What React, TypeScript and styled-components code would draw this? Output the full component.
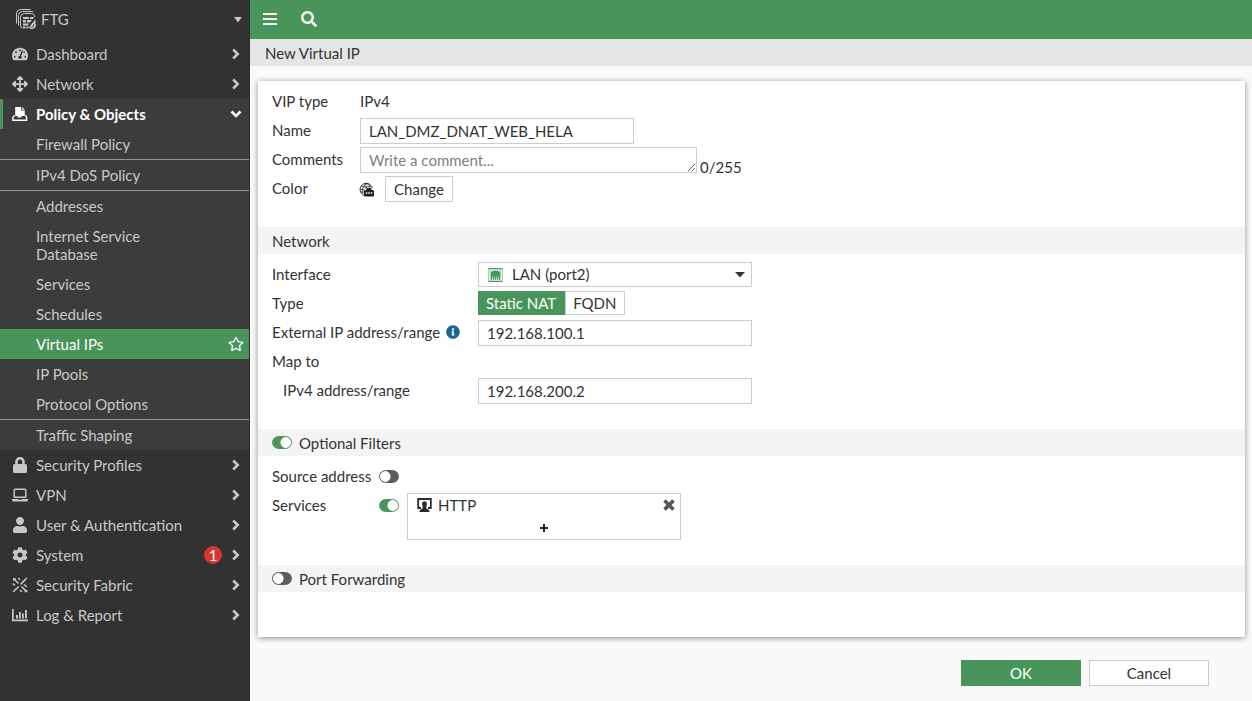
import React, { useState } from 'react';
import styled, { createGlobalStyle, css } from 'styled-components';
import { FaArrowsAlt, FaCog, FaInfoCircle, FaLock, FaRegStar, FaSearch, FaTachometerAlt, FaUser } from 'react-icons/fa';

const green = '#48945a';
const border = '#cccccc';

const GlobalStyle = createGlobalStyle`
  * { box-sizing: border-box; }
  body {
    margin: 0;
    background: #fafafa;
    color: #333333;
    font: 15px/18px Lato, "Liberation Sans", sans-serif;
  }
  input, select, textarea, button { font: inherit; color: inherit; margin: 0; }
`;

const Page = styled.div`
  display: flex;
  min-height: 100vh;
`;

const Sidebar = styled.nav`
  flex: 0 0 250px;
  background: #323232;
  border-right: 1px solid #2b2b2b;
  color: #c8c8c8;
`;

const DeviceButton = styled.button`
  display: flex;
  align-items: center;
  gap: 5px;
  width: 100%;
  height: 39px;
  padding: 0 7px 1px 16px;
  border: 0;
  background: none;
  text-align: left;
`;

const Grow = styled.span`
  flex: 1;
`;

const List = styled.ul`
  margin: 0;
  padding: 0;
  list-style: none;
`;

const Item = styled.li<{ $open?: boolean }>`
  background: ${(p) => (p.$open ? '#3c3c3c' : 'none')};
`;

const NavLink = styled.a<{ $open?: boolean }>`
  display: flex;
  align-items: center;
  gap: 8px;
  height: 30px;
  padding: 0 7px 0 ${(p) => (p.$open ? 9 : 12)}px;
  color: inherit;
  text-decoration: none;
  ${(p) => p.$open && css`
    border-left: 3px solid ${green};
    color: #ffffff;
    font-weight: 700;
  `}
`;

const IconBox = styled.span`
  display: flex;
  flex: 0 0 16px;
  justify-content: center;
`;

const Badge = styled.span`
  width: 18px;
  border-radius: 9px;
  background: #d9362b;
  color: #ffffff;
  text-align: center;
`;

const SubItem = styled.li<{ $divided?: boolean }>`
  border-bottom: ${(p) => (p.$divided ? '1px solid #969696' : '0')};
`;

const SubLink = styled.a<{ $active?: boolean }>`
  display: flex;
  align-items: center;
  justify-content: space-between;
  padding: 6px 5px 6px 36px;
  background: ${(p) => (p.$active ? green : 'none')};
  color: ${(p) => (p.$active ? '#ffffff' : 'inherit')};
  text-decoration: none;
`;

const SubText = styled.span`
  max-width: 150px;
`;

const Main = styled.main`
  flex: 1;
  min-width: 0;
`;

const TopBar = styled.header`
  display: flex;
  align-items: center;
  gap: 24px;
  height: 39px;
  padding: 0 13px 1px;
  background: ${green};
  color: #f4f9f5;
`;

const BareButton = styled.button`
  display: flex;
  align-items: center;
  justify-content: center;
  padding: 0;
  border: 0;
  background: none;
`;

const Title = styled.h1`
  margin: 0;
  padding: 5px 15px 4px;
  background: #e5e5e5;
  font-size: 15px;
  font-weight: 400;
`;

const Card = styled.div`
  margin: 15px 7px 0 8px;
  padding-bottom: 15px;
  background: #ffffff;
  box-shadow: 0 1px 6px rgba(0, 0, 0, 0.45);
`;

const SectionHead = styled.h2`
  display: flex;
  align-items: center;
  gap: 7px;
  margin: 0;
  height: 27px;
  padding: 0 14px;
  background: #f4f4f4;
  font-size: 15px;
  font-weight: 400;
`;

const Rows = styled.div`
  padding: 6px 14px 24px;
`;

const Row = styled.div`
  display: flex;
  min-height: 29px;
`;

const Label = styled.label<{ $width: number; $indent?: boolean }>`
  display: flex;
  align-items: flex-start;
  gap: 6px;
  flex: 0 0 ${(p) => p.$width}px;
  padding: 5px 0 0 ${(p) => (p.$indent ? 11 : 0)}px;
  > svg { margin-top: 2px; }
`;

const Field = styled.div`
  display: flex;
  align-items: flex-start;
  padding: 2px 0 1px;
`;

const PlainValue = styled.span`
  padding-top: 3px;
`;

const TextInput = styled.input`
  width: 274px;
  height: 26px;
  padding: 0 8px;
  border: 1px solid ${border};
  background: #ffffff;
`;

const Comment = styled.textarea`
  display: block;
  width: 337px;
  height: 26px;
  padding: 3px 8px;
  border: 1px solid ${border};
  background: #ffffff;
  resize: both;
  &::placeholder { color: #808080; opacity: 1; }
`;

const Counter = styled.span`
  align-self: flex-end;
  padding-left: 3px;
  line-height: 16px;
  margin-bottom: -2px;
`;

const Button = styled.button<{ $primary?: boolean; $wide?: boolean }>`
  height: 26px;
  min-width: ${(p) => (p.$wide ? '120px' : '68px')};
  padding: 0 8px;
  border: 1px solid ${(p) => (p.$primary ? green : border)};
  background: ${(p) => (p.$primary ? green : '#ffffff')};
  color: ${(p) => (p.$primary ? '#ffffff' : 'inherit')};
`;

const ColorField = styled(Field)`
  gap: 11px;
  align-items: center;
`;

const SelectBox = styled.div`
  display: grid;
  grid-template-columns: 34px 1fr 24px;
  align-items: center;
  width: 274px;
  height: 25px;
  > * { grid-row: 1; pointer-events: none; }
  > svg:first-of-type { grid-column: 1; justify-self: center; z-index: 1; }
  > svg:last-of-type { grid-column: 3; justify-self: center; z-index: 1; }
`;

const Select = styled.select`
  grid-column: 1 / -1;
  height: 25px;
  padding: 0 24px 1px 33px;
  border: 1px solid ${border};
  border-radius: 0;
  background: #ffffff;
  appearance: none;
  pointer-events: auto;
`;

const Segments = styled.div`
  display: flex;
`;

const Segment = styled.label<{ $on: boolean }>`
  position: relative;
  height: 24px;
  padding: 2px 8px 0 7px;
  border: 1px solid ${(p) => (p.$on ? green : border)};
  background: ${(p) => (p.$on ? green : '#ffffff')};
  color: ${(p) => (p.$on ? '#ffffff' : 'inherit')};
`;

const HiddenRadio = styled.input`
  position: absolute;
  inset: 0;
  opacity: 0;
`;

const Toggle = styled.input`
  appearance: none;
  flex: 0 0 20px;
  width: 20px;
  height: 13px;
  border: 1px solid #5c5c5c;
  border-radius: 7px;
  background: radial-gradient(circle at 5px 50%, #ffffff 5px, #5c5c5c 6px);
  &:checked {
    border-color: ${green};
    background: radial-gradient(circle at 13px 50%, #ffffff 5px, ${green} 6px);
  }
`;

const ToggleField = styled(Field)`
  gap: 8px;
  > ${Toggle} { margin-top: 6px; }
`;

const Picker = styled.div`
  width: 274px;
  border: 1px solid ${border};
`;

const Entry = styled.div`
  display: flex;
  align-items: center;
  gap: 6px;
  height: 22px;
  padding: 0 5px 0 9px;
`;

const AddButton = styled(BareButton)`
  width: 100%;
  height: 23px;
`;

const Footer = styled.footer`
  display: flex;
  justify-content: flex-end;
  gap: 8px;
  padding: 23px 43px 15px;
`;

const Chevron = ({ down }: { down?: boolean }) => (
  <svg width="12" height="12" viewBox="0 0 12 12" fill="none" stroke="currentColor" strokeWidth="2.6">
    <path d={down ? 'M1.5 3.5 6 8l4.5-4.5' : 'M3.2 1.5 7.7 6l-4.5 4.5'} />
  </svg>
);

const Caret = ({ width = 10 }: { width?: number }) => (
  <svg width={width} height="5" viewBox="0 0 10 5" preserveAspectRatio="none" fill="currentColor"><path d="M0 0h10L5.6 4.700a.9.9 0 0 1-1.200 0z" /></svg>
);

const DeviceIcon = () => (
  <svg width="20" height="20" viewBox="0 0 20 20" fill="none" stroke="currentColor" strokeWidth="1">
    <path d="M.5 14.500V4.500q0-4 4-4h10M2.500 16.500V6.500q0-4 4-4H17" />
    <path d="M6.500 19Q4.500 18.500 4.500 17V8.500q0-4 4-4h7q3 0 3.500 3.500" />
    <path stroke="none" fill="currentColor" d="M7 8h6v2H7zM14 8h4l-1 2h-3zM7 11h3v2.500H7zM11 11h5l-2 2.500h-3zM7 14.500h5.500v2H7zM7 17.500h2.500v2H7zM10.500 17.500h2v2h-2zM18.700 10c1.300 2 1.300 3.800.4 5.100l1-.5c0 3.400-1.500 5.400-4.200 5.400-2.200 0-3-1.500-2.600-3.100.6.700 1 .7 1.300.6-.4-3.200 3.900-3.900 4.100-7.500z" />
    <path stroke="#323232" d="M15.400 18.500q2.400-.7 2.600-3.200" />
  </svg>
);

const PolicyIcon = () => (
  <svg width="16" height="16" viewBox="0 0 16 16">
    <path fill="currentColor" d="M3.200 1h6v3.500h3.600V10H10l-1 1.500H6L5 10H3.200zM10.200 1l2.600 2.700h-2.600z" />
    <path fill="none" stroke="currentColor" strokeWidth="1.400" d="M2.500 9.300.9 11.500v2.800h13.700v-2.800L13.500 9.300" />
  </svg>
);

const LaptopIcon = () => (
  <svg width="16" height="14" viewBox="0 0 16 14">
    <rect x="2.250" y="1.250" width="11.500" height="8" rx=".6" fill="none" stroke="currentColor" strokeWidth="1.500" />
    <path fill="currentColor" d="M0 11h6l.5.700h3l.5-.7h6v1q0 1.500-1.500 1.500h-13Q0 13.500 0 12z" />
  </svg>
);

const FabricIcon = () => (
  <svg width="16" height="16" viewBox="0 0 16 16" fill="none" stroke="currentColor" strokeWidth="1.500">
    <path d="M2.500 2.500 6.500 6.500M9.500 9.500l4 4M13.500 2.500 8.500 7.500M7 9.500l-4.500 4M6.300 1 8 2.700M10.500 5l4.500-4M.8 6.500 3 8.500M12 7.500l3 2.500M1 15l4-4M8 13l2 2" />
    <path stroke="none" fill="currentColor" d="M1 1h2.500v2.500H1zM12.700 12.700h2.500v2.500h-2.500z" />
  </svg>
);

const ReportIcon = () => (
  <svg width="16" height="13" viewBox="0 0 16 13" fill="currentColor">
    <path d="M0 0h1.700v10.600H16v1.700H0zM4 6h2v3.500H4zM7 3h1.800v6.500H7zM10 4.500h1.800v5H10zM13 1h1.900v8.500H13z" />
  </svg>
);

const MenuIcon = () => (
  <svg width="14" height="12" viewBox="0 0 14 12" fill="currentColor"><path d="M0 0h14v2H0zM0 5h14v2H0zM0 10h14v2H0z" /></svg>
);

const GlobeIcon = () => (
  <svg width="15" height="15" viewBox="0 0 15 15" fill="none" stroke="#2b2b2b">
    <path d="M5 13.300A6.200 6.200 0 1 1 13.300 6" />
    <path strokeWidth=".8" d="M3.500 11.500Q2.500 6 7 1M7 1q4 1.500 4.200 5M2.200 4.200q5 2 9.600 0M1 7.500h4M7 1v6M2 10h3" />
    <path stroke="none" fill="#222222" d="M6 8h1.500V7q0-1 1-1h3q1 0 1 1v1H14q1 0 1 1v4.500q0 1-1 1H6q-1 0-1-1V9q0-1 1-1z" />
    <path stroke="#ffffff" strokeWidth="1.600" strokeDasharray="1.500 1" d="M6.800 11h6.800" />
  </svg>
);

const PortIcon = () => (
  <svg width="15" height="14" viewBox="0 0 15 14">
    <path fill="#a5cbae" d="M0 0h15v14H0z" />
    <path fill={green} d="M1 0h13v1H1zM1 13h13v1H1zM3 4h2V2.500h5V4h2v4.500H3z" />
    <path stroke="#ffffff" fill="none" d="M1.500 12V2h12v10z" strokeWidth=".8" />
    <path stroke={green} strokeWidth=".8" d="M3.500 8v4M5.500 8v4M7.500 8v4M9.500 8v4M11.500 8v4" />
  </svg>
);

const ServiceIcon = () => (
  <svg width="15" height="14" viewBox="0 0 15 14">
    <path fill="none" stroke="#2b2b2b" strokeWidth="1.800" d="M4 10H1.200V1h12.600v9H11" />
    <path fill="#2b2b2b" d="M7.500 3.200a2.400 2.400 0 0 1 2.400 2.600q0 1.500-.5 2.400v2.300l3 1.700V14H2.600v-1.800l3-1.700V8.200q-.5-.9-.5-2.400a2.400 2.400 0 0 1 2.400-2.600z" />
  </svg>
);

const CrossIcon = () => (
  <svg width="12" height="12" viewBox="0 0 12 12" stroke="#555555" strokeWidth="3.600"><path d="m1.500 1.500 9 9M10.500 1.500l-9 9" /></svg>
);

const PlusIcon = () => (
  <svg width="8" height="8" viewBox="0 0 8 8" stroke="#222222" strokeWidth="2"><path d="M4 0v8M0 4h8" /></svg>
);

const policyItems = [
  { text: 'Firewall Policy', divided: true },
  { text: 'IPv4 DoS Policy', divided: true },
  { text: 'Addresses' },
  { text: 'Internet Service Database' },
  { text: 'Services' },
  { text: 'Schedules' },
  { text: 'Virtual IPs', active: true },
  { text: 'IP Pools' },
  { text: 'Protocol Options', divided: true },
  { text: 'Traffic Shaping' },
];

type NavEntry = { text: string; icon: React.ReactNode; badge?: string; items?: typeof policyItems };

const navigation: NavEntry[] = [
  { text: 'Dashboard', icon: <FaTachometerAlt size={16} /> },
  { text: 'Network', icon: <FaArrowsAlt size={16} /> },
  { text: 'Policy & Objects', icon: <PolicyIcon />, items: policyItems },
  { text: 'Security Profiles', icon: <FaLock size={16} /> },
  { text: 'VPN', icon: <LaptopIcon /> },
  { text: 'User & Authentication', icon: <FaUser size={16} /> },
  { text: 'System', icon: <FaCog size={16} />, badge: '1' },
  { text: 'Security Fabric', icon: <FabricIcon /> },
  { text: 'Log & Report', icon: <ReportIcon /> },
];

const natTypes = ['Static NAT', 'FQDN'];

export default function App() {
  const [name, setName] = useState('LAN_DMZ_DNAT_WEB_HELA');
  const [comment, setComment] = useState('');
  const [natType, setNatType] = useState(natTypes[0]);

  return (
    <>
      <GlobalStyle />
      <Page>
        <Sidebar>
          <DeviceButton type="button">
            <DeviceIcon />
            <Grow>FTG</Grow>
            <Caret width={8} />
          </DeviceButton>
          <List>
            {navigation.map(({ text, icon, badge, items }) => (
              <Item key={text} $open={!!items}>
                <NavLink href="#" $open={!!items}>
                  <IconBox>{icon}</IconBox>
                  <Grow>{text}</Grow>
                  {badge && <Badge>{badge}</Badge>}
                  <Chevron down={!!items} />
                </NavLink>
                {items && (
                  <List>
                    {items.map((item) => (
                      <SubItem key={item.text} $divided={item.divided}>
                        <SubLink href="#" $active={item.active}>
                          <SubText>{item.text}</SubText>
                          {item.active && <FaRegStar size={16} />}
                        </SubLink>
                      </SubItem>
                    ))}
                  </List>
                )}
              </Item>
            ))}
          </List>
        </Sidebar>
        <Main>
          <TopBar>
            <BareButton type="button" aria-label="Menu"><MenuIcon /></BareButton>
            <BareButton type="button" aria-label="Search"><FaSearch size={16} /></BareButton>
          </TopBar>
          <Title>New Virtual IP</Title>
          <form onSubmit={(e) => e.preventDefault()}>
            <Card>
              <Rows>
                <Row>
                  <Label as="span" $width={88}>VIP type</Label>
                  <Field><PlainValue>IPv4</PlainValue></Field>
                </Row>
                <Row>
                  <Label htmlFor="name" $width={88}>Name</Label>
                  <Field><TextInput id="name" value={name} onChange={(e) => setName(e.target.value)} /></Field>
                </Row>
                <Row>
                  <Label htmlFor="comments" $width={88}>Comments</Label>
                  <Field>
                    <Comment id="comments" rows={1} maxLength={255} placeholder="Write a comment..." value={comment} onChange={(e) => setComment(e.target.value)} />
                    <Counter>{comment.length}/255</Counter>
                  </Field>
                </Row>
                <Row>
                  <Label htmlFor="color" $width={87}>Color</Label>
                  <ColorField><GlobeIcon /><Button id="color" type="button">Change</Button></ColorField>
                </Row>
              </Rows>

              <SectionHead>Network</SectionHead>
              <Rows>
                <Row>
                  <Label htmlFor="interface" $width={206}>Interface</Label>
                  <Field>
                    <SelectBox>
                      <PortIcon />
                      <Select id="interface"><option>LAN (port2)</option></Select>
                      <Caret />
                    </SelectBox>
                  </Field>
                </Row>
                <Row>
                  <Label as="span" id="type-label" $width={206}>Type</Label>
                  <Field>
                    <Segments role="radiogroup" aria-labelledby="type-label">
                      {natTypes.map((t) => (
                        <Segment key={t} $on={t === natType}>
                          <HiddenRadio type="radio" name="type" checked={t === natType} onChange={() => setNatType(t)} />
                          {t}
                        </Segment>
                      ))}
                    </Segments>
                  </Field>
                </Row>
                <Row>
                  <Label htmlFor="external" $width={206}>External IP address/range <FaInfoCircle size={14} color="#1a6496" /></Label>
                  <Field><TextInput id="external" defaultValue="192.168.100.1" /></Field>
                </Row>
                <Row>
                  <Label as="span" $width={206}>Map to</Label>
                </Row>
                <Row>
                  <Label htmlFor="mapped" $width={206} $indent>IPv4 address/range</Label>
                  <Field><TextInput id="mapped" defaultValue="192.168.200.2" /></Field>
                </Row>
              </Rows>

              <SectionHead>
                <Toggle type="checkbox" id="filters" defaultChecked />
                <label htmlFor="filters">Optional Filters</label>
              </SectionHead>
              <Rows>
                <Row>
                  <Label htmlFor="source" $width={107}>Source address</Label>
                  <ToggleField><Toggle type="checkbox" id="source" /></ToggleField>
                </Row>
                <Row>
                  <Label htmlFor="services" $width={107}>Services</Label>
                  <ToggleField>
                    <Toggle type="checkbox" id="services" defaultChecked />
                    <Picker>
                      <Entry>
                        <ServiceIcon />
                        <Grow>HTTP</Grow>
                        <BareButton type="button" aria-label="Remove HTTP"><CrossIcon /></BareButton>
                      </Entry>
                      <AddButton type="button" aria-label="Add service"><PlusIcon /></AddButton>
                    </Picker>
                  </ToggleField>
                </Row>
              </Rows>

              <SectionHead>
                <Toggle type="checkbox" id="forwarding" />
                <label htmlFor="forwarding">Port Forwarding</label>
              </SectionHead>
              <Rows />
            </Card>
            <Footer>
              <Button type="submit" $primary $wide>OK</Button>
              <Button type="button" $wide>Cancel</Button>
            </Footer>
          </form>
        </Main>
      </Page>
    </>
  );
}
